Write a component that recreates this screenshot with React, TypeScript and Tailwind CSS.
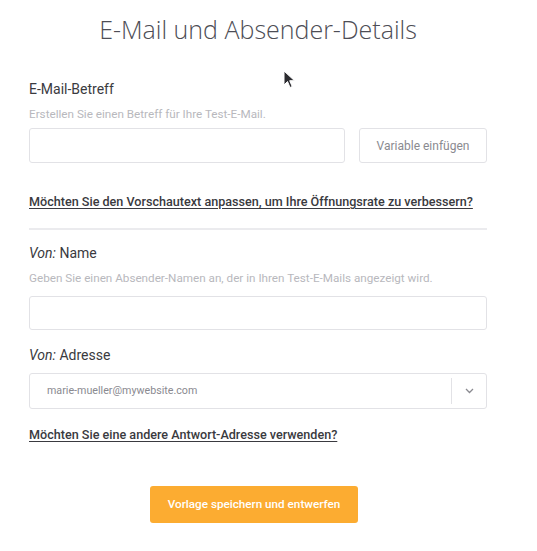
import React from "react";

export default function App() {
  const roboto = { fontFamily: "Roboto, 'Liberation Sans', sans-serif" };
  return (
    <div className="relative min-h-[551px] w-[537px] bg-white" style={roboto}>
      <div className="pl-[29px] pt-[13px] w-[487px]">
        <h1
          className="text-center text-[25px] font-light leading-[32px] text-[#4d4d55]"
          style={{ fontFamily: "'Open Sans', sans-serif" }}
        >
          E-Mail und Absender-Details
        </h1>

        <div className="w-[458px]">
          <div className="mt-[36px] text-[14px] leading-[16px] text-[#3a3a40]">E-Mail-Betreff</div>
          <div className="mt-[10px] text-[11.7px] leading-[14px] text-[#b8b8bd]">
            Erstellen Sie einen Betreff für Ihre Test-E-Mail.
          </div>
          <div className="mt-[7px] flex gap-[14px]">
            <div className="h-[35px] w-[316px] rounded-[3px] border border-[#e2e2e6] bg-white" />
            <div className="flex h-[35px] flex-1 items-center justify-center rounded-[3px] border border-[#e2e2e6] bg-white text-[12px] text-[#8a8a90]">
              Variable einfügen
            </div>
          </div>

          <div className="mt-[31px] text-[12.6px] font-medium leading-[16px] text-[#3a3a40] underline underline-offset-[2px]">
            Möchten Sie den Vorschautext anpassen, um Ihre Öffnungsrate zu verbessern?
          </div>

          <div className="mt-[18px] h-[2px] bg-[#ebebee]" />

          <div className="mt-[15px] text-[14px] leading-[16px] text-[#3a3a40]">
            <span className="italic">Von:</span> Name
          </div>
          <div className="mt-[10px] text-[11.7px] leading-[14px] text-[#b8b8bd]">
            Geben Sie einen Absender-Namen an, der in Ihren Test-E-Mails angezeigt wird.
          </div>
          <div className="mt-[11px] h-[34px] rounded-[3px] border border-[#e2e2e6] bg-white" />

          <div className="mt-[17px] text-[14px] leading-[16px] text-[#3a3a40]">
            <span className="italic">Von:</span> Adresse
          </div>
          <div className="mt-[10px] flex h-[36px] items-center rounded-[3px] border border-[#e2e2e6] bg-white">
            <div className="flex-1 pl-[17px] text-[10.7px] text-[#8a8a90]">marie-mueller@mywebsite.com</div>
            <div className="h-[26px] w-px bg-[#e2e2e6]" />
            <div className="flex w-[34px] items-center justify-center">
              <svg width="9" height="6" viewBox="0 0 9 6" fill="none">
                <path d="M1 1l3.5 3.5L8 1" stroke="#8a8a90" strokeWidth="1.3" />
              </svg>
            </div>
          </div>

          <div className="mt-[18px] text-[12.6px] font-medium leading-[16px] text-[#3a3a40] underline underline-offset-[2px]">
            Möchten Sie eine andere Antwort-Adresse verwenden?
          </div>

          <div className="mt-[43px] flex justify-center pr-[8px]">
            <div className="flex h-[37px] w-[208px] items-center justify-center rounded-[3px] bg-[#fcac31] text-[11.7px] font-medium text-white">
              Vorlage speichern und entwerfen
            </div>
          </div>
        </div>
      </div>

      <svg className="absolute left-[283px] top-[70px]" width="14" height="20" viewBox="0 0 14 20">
        <path d="M1 1v14l3.5-3.5 2.5 6 2.2-1-2.5-5.8H11.5z" fill="#2b2b30" stroke="#fff" strokeWidth="1" />
      </svg>
    </div>
  );
}
